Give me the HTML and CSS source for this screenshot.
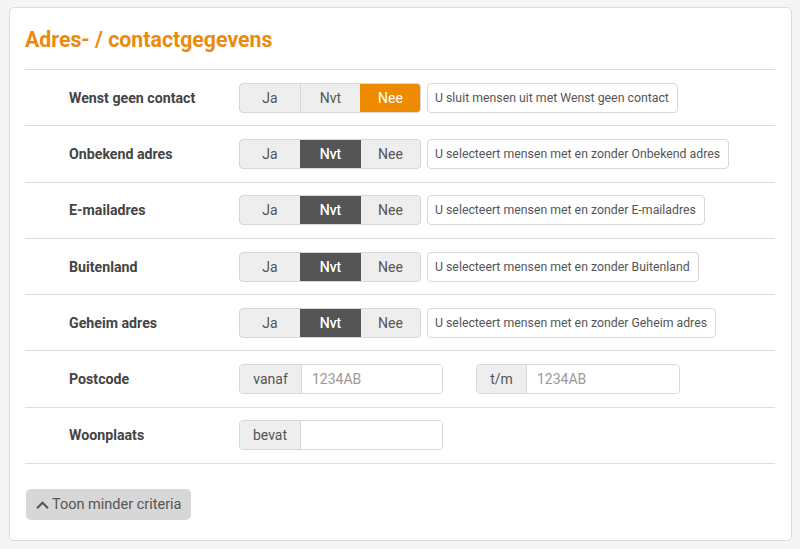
FILE: index.html
```html
<!DOCTYPE html>
<html lang="nl">
<head>
<meta charset="utf-8">
<title>Adres- / contactgegevens</title>
<link rel="stylesheet" href="styles.css">
</head>
<body>
<div class="card">
  <h2 class="title">Adres- / contactgegevens</h2>
  <div class="rows">
    <div class="row">
      <div class="label">Wenst geen contact</div>
      <div class="btn-group">
        <span class="seg seg-ja">Ja</span><span class="seg">Nvt</span><span class="seg active-orange">Nee</span>
      </div>
      <div class="hint">U sluit mensen uit met Wenst geen contact</div>
    </div>
    <div class="row">
      <div class="label">Onbekend adres</div>
      <div class="btn-group">
        <span class="seg seg-ja">Ja</span><span class="seg active-dark">Nvt</span><span class="seg">Nee</span>
      </div>
      <div class="hint">U selecteert mensen met en zonder Onbekend adres</div>
    </div>
    <div class="row">
      <div class="label">E-mailadres</div>
      <div class="btn-group">
        <span class="seg seg-ja">Ja</span><span class="seg active-dark">Nvt</span><span class="seg">Nee</span>
      </div>
      <div class="hint">U selecteert mensen met en zonder E-mailadres</div>
    </div>
    <div class="row">
      <div class="label">Buitenland</div>
      <div class="btn-group">
        <span class="seg seg-ja">Ja</span><span class="seg active-dark">Nvt</span><span class="seg">Nee</span>
      </div>
      <div class="hint">U selecteert mensen met en zonder Buitenland</div>
    </div>
    <div class="row">
      <div class="label">Geheim adres</div>
      <div class="btn-group">
        <span class="seg seg-ja">Ja</span><span class="seg active-dark">Nvt</span><span class="seg">Nee</span>
      </div>
      <div class="hint">U selecteert mensen met en zonder Geheim adres</div>
    </div>
    <div class="row">
      <div class="label">Postcode</div>
      <div class="input-group">
        <span class="addon addon-vanaf">vanaf</span><span class="field placeholder">1234AB</span>
      </div>
      <div class="input-group ig-tm">
        <span class="addon addon-tm">t/m</span><span class="field placeholder">1234AB</span>
      </div>
    </div>
    <div class="row">
      <div class="label">Woonplaats</div>
      <div class="input-group">
        <span class="addon addon-bevat">bevat</span><span class="field"></span>
      </div>
    </div>
  </div>
  <button class="toggle" type="button">
    <svg class="chev" width="13" height="8" viewBox="0 0 13 8" aria-hidden="true"><path d="M1 7.2 L6.5 1.7 L12 7.2" fill="none" stroke="#555" stroke-width="2"/></svg>Toon minder criteria
  </button>
</div>
</body>
</html>
```
FILE: styles.css
```css
* { box-sizing: border-box; }
html, body { margin: 0; }
body {
  background: #f5f5f5;
  font-family: Roboto, "Liberation Sans", Arial, sans-serif;
  color: #555;
  padding: 7px 8px 8px 9px;
}
.card {
  background: #fff;
  border: 1px solid #dcdcdc;
  border-radius: 5px;
  padding: 0 16px 20px 15px;
  height: 534px;
}
.title {
  margin: 0;
  padding: 19px 0 0 0;
  height: 61px;
  font-size: 21.3px;
  font-weight: 700;
  color: #ec8a0c;
}
.rows {
  border-bottom: 1px solid #ddd;
}
.row {
  display: flex;
  align-items: center;
  height: 56.3px;
  border-top: 1px solid #ddd;
}
.label {
  width: 214px;
  padding-left: 44px;
  font-size: 14.2px;
  font-weight: 700;
  color: #444;
}
.btn-group {
  display: flex;
  height: 30px;
  border: 1px solid #d6d6d6;
  border-radius: 4px;
  overflow: hidden;
  background: #eee;
}
.seg {
  width: 60px;
  display: flex;
  align-items: center;
  justify-content: center;
  font-size: 14px;
  color: #555;
  border-left: 1px solid #d6d6d6;
}
.seg-ja { width: 60px; border-left: none; }
.active-orange {
  background: #ee8a00;
  color: #fff;
  border-left-color: #ee8a00;
}
.active-dark {
  background: #555;
  color: #fff;
  border-left-color: #555;
  text-shadow: 0 0 0.4px #fff;
}
.active-dark + .seg { border-left-color: #555; }
.hint {
  margin-left: 6px;
  height: 30px;
  display: flex;
  align-items: center;
  padding: 0 8px 0 7px;
  border: 1px solid #d8d8d8;
  border-radius: 4px;
  font-size: 12.3px;
  color: #555;
}
.input-group {
  display: flex;
  height: 30px;
  width: 204px;
  border: 1px solid #d8d8d8;
  border-radius: 4px;
  overflow: hidden;
}
.ig-tm { margin-left: 33px; }
.addon {
  display: flex;
  align-items: center;
  justify-content: center;
  background: #eee;
  border-right: 1px solid #d8d8d8;
  font-size: 14px;
  color: #555;
}
.addon-vanaf { width: 62px; }
.addon-tm { width: 50px; }
.addon-bevat { width: 61px; }
.field {
  flex: 1;
  display: flex;
  align-items: center;
  padding-left: 10px;
  font-size: 14px;
  background: #fff;
}
.placeholder { color: #999; }
.toggle {
  margin-top: 25px;
  margin-left: 1px;
  height: 31px;
  width: 165px;
  border: none;
  border-radius: 5px;
  background: #d7d7d7;
  font-family: Roboto, "Liberation Sans", Arial, sans-serif;
  font-size: 14.5px;
  color: #555;
  display: flex;
  align-items: center;
  padding: 0 0 0 10px;
  gap: 3px;
}
.chev { display: block; }
```
